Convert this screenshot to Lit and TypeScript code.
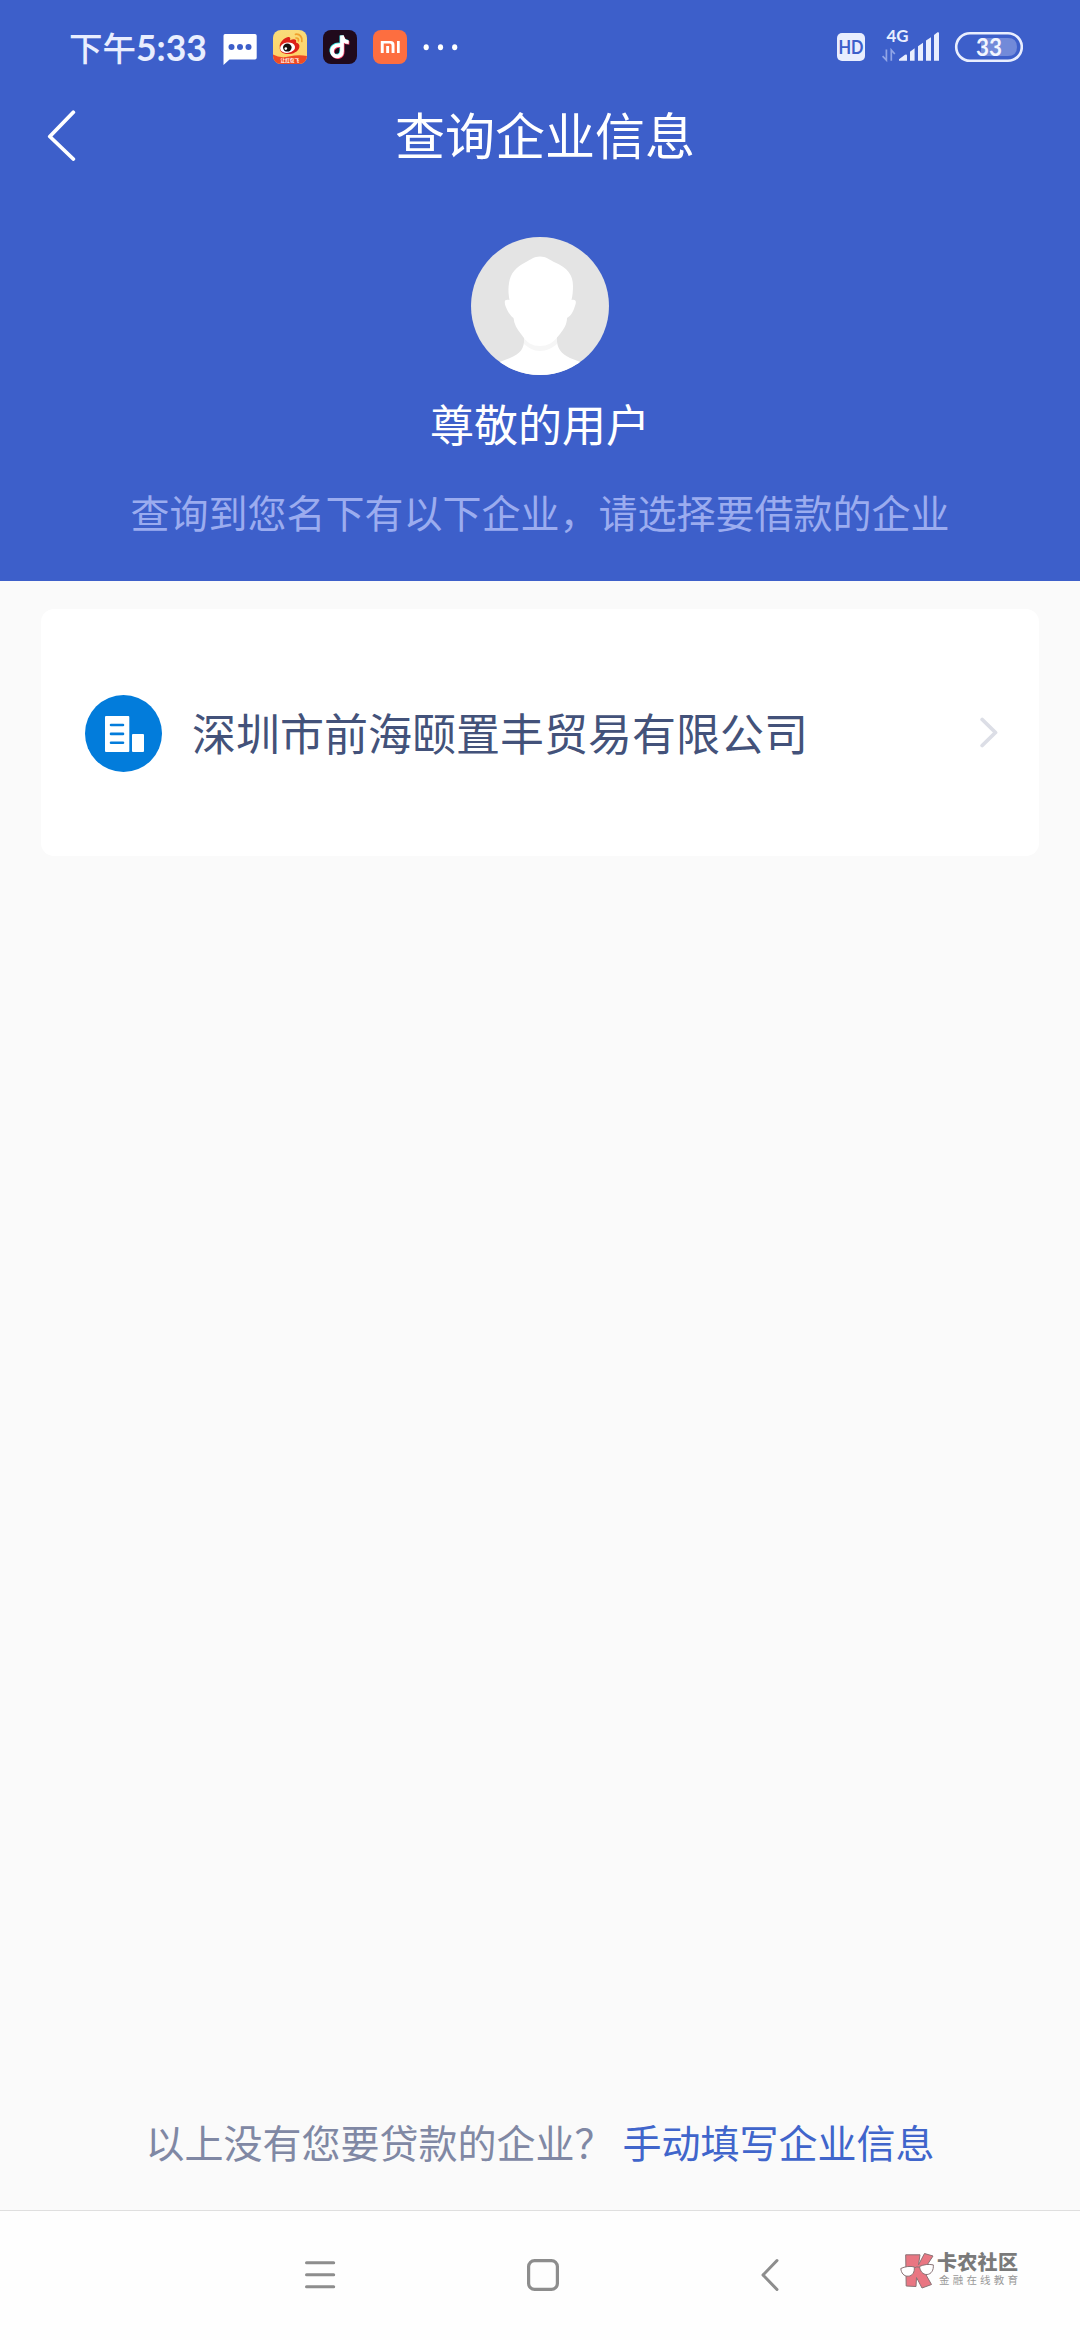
import { LitElement, html, css } from "lit";
import { customElement, property } from "lit/decorators.js";

@customElement("status-bar")
class StatusBar extends LitElement {
  static styles = css`
    :host { display: block; height: 94px; color: #e9eefe; }
    .bar { display: flex; align-items: flex-start; height: 94px; padding: 0 57px 0 69px; box-sizing: border-box; }
    .time { width: 154px; height: 94px; display: flex; font: 500 33.5px/93px "Noto Sans CJK SC", sans-serif; white-space: nowrap; }
    .digits { font: 700 35.5px/96px Lato, sans-serif; }
    svg { display: block; }
    .left, .right { display: flex; padding-top: 26px; }
    .right { margin-left: auto; }
    .lat { font-family: Lato, sans-serif; font-weight: 700; }
    .tiny { font-family: "Noto Sans CJK SC", sans-serif; font-weight: 700; }
  `;
  render() {
    return html`
      <div class="bar">
        <div class="time"><span>下午</span><span class="digits">5:33</span></div>
        <div class="left">
          <svg width="240" height="42" viewBox="223 26 240 42">
            <path fill="#fff" d="M225 34h30q1.700 0 1.700 1.700v22q0 1.700-1.700 1.700h-25.500l-6 5.600V35.700q0-1.700 1.500-1.700z"/>
            <g fill="#3d5fca"><circle cx="231.500" cy="47" r="3"/><circle cx="240" cy="47" r="3"/><circle cx="248.500" cy="47" r="3"/></g>
            <defs>
              <linearGradient id="wb" x1="0" y1="0" x2="0" y2="1"><stop offset="0" stop-color="#f9dc7a"/><stop offset="1" stop-color="#ffd065"/></linearGradient>
              <clipPath id="wc"><rect x="273" y="30" width="34" height="34" rx="8"/></clipPath>
            </defs>
            <g clip-path="url(#wc)">
              <rect x="273" y="30" width="34" height="34" fill="url(#wb)"/>
              <path d="M273 54.500q7 4 16 2t18-.6V64h-34z" fill="#ef4a24"/>
            </g>
            <path fill="#dd2118" d="M279.800 47c-1-4 4.600-9.400 8.300-10 2.300-.3 2.500 1.500 1.900 3.300 3.400-1.700 7.200-1.700 6 2.100 3 1 3.900 2.600 3.300 5-1 4-6.300 6.700-11.300 6.700-5.200 0-8.800-2.600-8.200-7.100z"/>
            <ellipse cx="287.600" cy="47.700" rx="7.500" ry="5.200" fill="#fff" transform="rotate(-8 287.600 47.700)"/>
            <ellipse cx="287.300" cy="47.600" rx="4.300" ry="4" fill="#15100f"/>
            <circle cx="285.800" cy="48.600" r="1.300" fill="#fff"/>
            <g fill="none" stroke="#f0a02c" stroke-width="1.700" stroke-linecap="round"><path d="M295.500 34.300c4.300-.6 7.300 3 6.300 7.200"/><path d="M296 38c1.800-.2 2.800 1 2.400 2.800"/></g>
            <text class="tiny" x="289.800" y="62.300" font-size="4.600" text-anchor="middle" fill="#fff">让红包飞</text>
            <rect x="323" y="30" width="34" height="34" rx="8" fill="#200a1c"/>
            <g fill="none" stroke-width="3.700">
              <path stroke="#35e2e2" d="M339.600 44.500c-5.200-.5-8.700 2.600-8.300 6.500.4 3.700 3.700 5.300 6.500 4.500 2.600-.8 3.500-2.600 3.500-5.300V35.500c.5 3.700 3 5.800 6.700 6"/>
              <path stroke="#f4436a" d="M341 46c-5.200-.5-8.700 2.600-8.300 6.500.4 3.700 3.700 5.300 6.500 4.500 2.600-.8 3.500-2.600 3.500-5.300V37c.5 3.700 3 5.800 6.700 6"/>
              <path stroke="#fff" d="M340.300 45.200c-5.200-.5-8.700 2.600-8.300 6.500.4 3.700 3.700 5.300 6.500 4.500 2.600-.8 3.500-2.600 3.500-5.300V35.500c.5 4.400 3 6.500 6.700 6.700"/>
            </g>
            <rect x="373" y="30" width="34" height="34" rx="8" fill="#fd6e40"/>
            <g fill="#fff"><path d="M380.800 41h9.700q4 0 4 4v8h-2.900v-7.500q0-1.900-1.900-1.900h-6V53h-2.900z"/><path d="M386.200 46h2.900v7h-2.900zM397 41h2.700v12H397z"/></g>
            <g fill="#fff"><ellipse cx="426.200" cy="47.200" rx="2.600" ry="3"/><ellipse cx="440.500" cy="47.200" rx="2.600" ry="3"/><ellipse cx="454.700" cy="47.200" rx="2.600" ry="3"/></g>
          </svg>
        </div>
        <div class="right">
          <svg width="187" height="42" viewBox="836 26 187 42">
            <rect x="837" y="33" width="28" height="28" rx="5" fill="#e9eefe"/>
            <text class="lat" x="851" y="54.200" font-size="18.500" text-anchor="middle" textLength="25" lengthAdjust="spacingAndGlyphs" fill="#3d5fca">HD</text>
            <text class="lat" x="886.500" y="42.300" font-size="17.500" textLength="22" lengthAdjust="spacingAndGlyphs" fill="#e9eefe">4G</text>
            <g fill="none" stroke="#91a5e6" stroke-width="1.700"><path d="M886.400 49.500v10.700l-3.800-4M891.300 60.700V50l3.500 4"/></g>
            <path fill="#e9eefe" d="M899 60.800v-1.500l6-4.500q2-1 2 1v5zM910 60.800v-9l4.600-3.500v12.500zM918 60.800V46.300l5-3.600v18.100zM926 60.800V40.500l5-3.300v23.600zM934 60.800V35l3.500-2.700q1.500-.5 1.500 1v27.500z"/>
            <rect x="956.200" y="33.200" width="65.600" height="27.600" rx="13.800" fill="none" stroke="#e9eefe" stroke-width="2.600"/>
            <path d="M981 38h27q9 0 9 9t-9 9h-27z" fill="#728ad9"/>
            <text class="lat" x="989" y="55.700" font-size="25" text-anchor="middle" textLength="26" lengthAdjust="spacingAndGlyphs" fill="#f2f5ff">33</text>
          </svg>
        </div>
      </div>`;
  }
}

@customElement("company-card")
class CompanyCard extends LitElement {
  @property() name = "";
  static styles = css`
    :host { display: block; }
    .card { display: flex; align-items: center; height: 247px; margin: 0 41px; padding: 0 41px 0 44px; box-sizing: border-box; background: #fff; border-radius: 13px; }
    .name { margin: -2px 0 0 30px; flex: 1; font: 400 44px/64px "Noto Sans CJK SC", sans-serif; color: #43527a; white-space: nowrap; }
    .chev { display: block; }
    .icon { display: block; margin-top: 2px; }
  `;
  render() {
    return html`
      <div class="card">
        <svg class="icon" width="77" height="77" viewBox="0 0 77 77">
          <circle cx="38.500" cy="38.500" r="38.500" fill="#027cdb"/>
          <rect x="20" y="21" width="24.300" height="36" rx="1" fill="#fff"/>
          <rect x="47" y="39" width="12" height="18" rx="1" fill="#fff"/>
          <path stroke="#027cdb" stroke-width="2.600" stroke-linecap="round" d="M26 30h12M26 38.900h12M26 47.700h12"/>
        </svg>
        <span class="name">${this.name}</span>
        <svg class="chev" width="18" height="31" viewBox="0 0 18 31"><path d="M2.200 2.500 15.500 15.500 2.200 28.500" fill="none" stroke="#dcdee6" stroke-width="3.800" stroke-linecap="round" stroke-linejoin="round"/></svg>
      </div>`;
  }
}

@customElement("nav-bar")
class NavBar extends LitElement {
  static styles = css`
    :host { display: block; }
    .nav { display: flex; align-items: flex-start; height: 130px; box-sizing: border-box; border-top: 1px solid #dfdfdf; background: #fefefe; padding: 47px 60px 0 304px; }
    svg { display: block; }
    .home { margin-left: 191px; }
    .back { margin-left: 201px; }
    .brand { display: flex; margin-left: auto; margin-top: -7px; }
    .words { display: flex; flex-direction: column; margin-left: 2px; width: 83px; white-space: nowrap; }
    .big { font: 900 20px/22px "Noto Sans CJK SC", sans-serif; color: #7a7a7a; letter-spacing: .3px; }
    .small { font: 400 10.500px/14px "Noto Sans CJK SC", sans-serif; color: #999; letter-spacing: 3.200px; margin: 0 0 0 2px; }
  `;
  render() {
    return html`
      <div class="nav">
        <svg width="32" height="34" viewBox="304 2258 32 34"><path stroke="#8d8d8d" stroke-width="3" stroke-linecap="round" d="M306.500 2262.700h27.200M306.500 2274.700h27.200M306.500 2286.700h27.200"/></svg>
        <svg class="home" width="32" height="34" viewBox="527 2258 32 34"><rect x="528.600" y="2260.600" width="28.800" height="28.800" rx="6" fill="none" stroke="#8d8d8d" stroke-width="3.200"/></svg>
        <svg class="back" width="20" height="34" viewBox="760 2258 20 34"><path d="M777 2260.500 763 2275l14 14.500" fill="none" stroke="#8d8d8d" stroke-width="3" stroke-linecap="round" stroke-linejoin="round"/></svg>
        <div class="brand">
          <svg width="35" height="38" viewBox="900 2251 35 38">
            <path fill="#e97682" stroke="#8a7275" stroke-width="1" stroke-linejoin="round" d="M905.700 2254.800h14.300l-1.500 10 6-11.300 8.500 2.500-9.500 14.500 8 14-9.500 3.500-5.500-10.500-.5 9-9.800-.5z"/>
            <g fill="#fff" stroke="#8a7275" stroke-width="1" stroke-linejoin="round">
              <path d="M900.800 2268.500c4-2 9.500-2.600 13.400-1.600.8 5.100-1.700 9.100-6 9.300-4.400.2-7-3.200-7.400-7.700z"/>
              <path d="M919.500 2266.500c3.900-2 9.500-2.600 13.800-1.600.5 5.200-2 9.300-6.200 9.600-4.400.3-7-3.500-7.600-8z"/>
              <path d="M914.200 2268q2.500-1.800 5.300-.8" fill="none"/>
            </g>
          </svg>
          <div class="words"><span class="big">卡农社区</span><span class="small">金融在线教育</span></div>
        </div>
      </div>`;
  }
}

@customElement("app-root")
class AppRoot extends LitElement {
  static styles = css`
    :host { display: block; }
    .page { display: flex; flex-direction: column; width: 1080px; height: 2340px; background: #fafafa; font-family: "Noto Sans CJK SC", sans-serif; }
    .hero { height: 581px; background: #3d5fca; display: flex; flex-direction: column; }
    .head { display: grid; grid-template-columns: 395px 300px 1fr; align-items: center; height: 82px; }
    .back { display: block; margin-left: 46px; }
    .title { font-size: 50px; line-height: 76px; margin-top: -4px; color: #fff; white-space: nowrap; }
    .avatar { display: block; margin: 61px auto 0; }
    .hello { margin-top: 16px; text-align: center; color: #fff; font-size: 44px; line-height: 64px; }
    .tip { margin-top: 28px; text-align: center; color: #9bacef; font-size: 39px; line-height: 56px; white-space: nowrap; }
    .list { padding-top: 28px; flex: 1; }
    .foot { display: flex; justify-content: center; gap: 9px; font-size: 39px; line-height: 56px; height: 97px; color: #8088a4; white-space: nowrap; }
    .link { color: #4065cb; }
  `;
  render() {
    return html`
      <div class="page">
        <header class="hero">
          <status-bar></status-bar>
          <div class="head">
            <svg class="back" width="32" height="52" viewBox="0 0 32 52"><path d="M27.300 3.300 3.800 27.500 27.300 50" fill="none" stroke="#fff" stroke-width="3.800" stroke-linecap="round" stroke-linejoin="round"/></svg>
            <span class="title">查询企业信息</span>
          </div>
          <svg class="avatar" width="138" height="138" viewBox="0 0 138 138">
            <defs><clipPath id="av"><circle cx="69" cy="69" r="69"/></clipPath></defs>
            <g clip-path="url(#av)">
              <rect width="138" height="138" fill="#e4e4e4"/>
              <path fill="#fff" d="M53 98c1 12-2 18-14 23l-13 5v14h86v-14l-13-5c-10-5-14-11-13-23z"/>
              <path fill="#f6f6f6" d="M53 100v7c5 4 9 7 16 7s12-3 17-7v-7z"/>
              <path fill="#fff" d="M69 19.500c6 0 9 3 14 5.500 14 6 19 13 19 24 0 5-.5 10-1.500 14 5-1 5 2 3.500 6-1.500 5-4 10-8 12 0 6-3 11-7 16-7 9-12 12-20 12s-13-3-19-12c-4-5-7-10-7.500-16-4-3-6.500-8-8-12-1.500-5-1-7 4-6-1-5-1.500-11-.5-17 1.500-10 7-16 17-21 5-2.500 8-5.500 14-5.500z"/>
            </g>
          </svg>
          <div class="hello">尊敬的用户</div>
          <div class="tip">查询到您名下有以下企业，请选择要借款的企业</div>
        </header>
        <main class="list"><company-card name="深圳市前海颐置丰贸易有限公司"></company-card></main>
        <div class="foot"><span>以上没有您要贷款的企业？</span><span class="link">手动填写企业信息</span></div>
        <nav-bar></nav-bar>
      </div>`;
  }
}
